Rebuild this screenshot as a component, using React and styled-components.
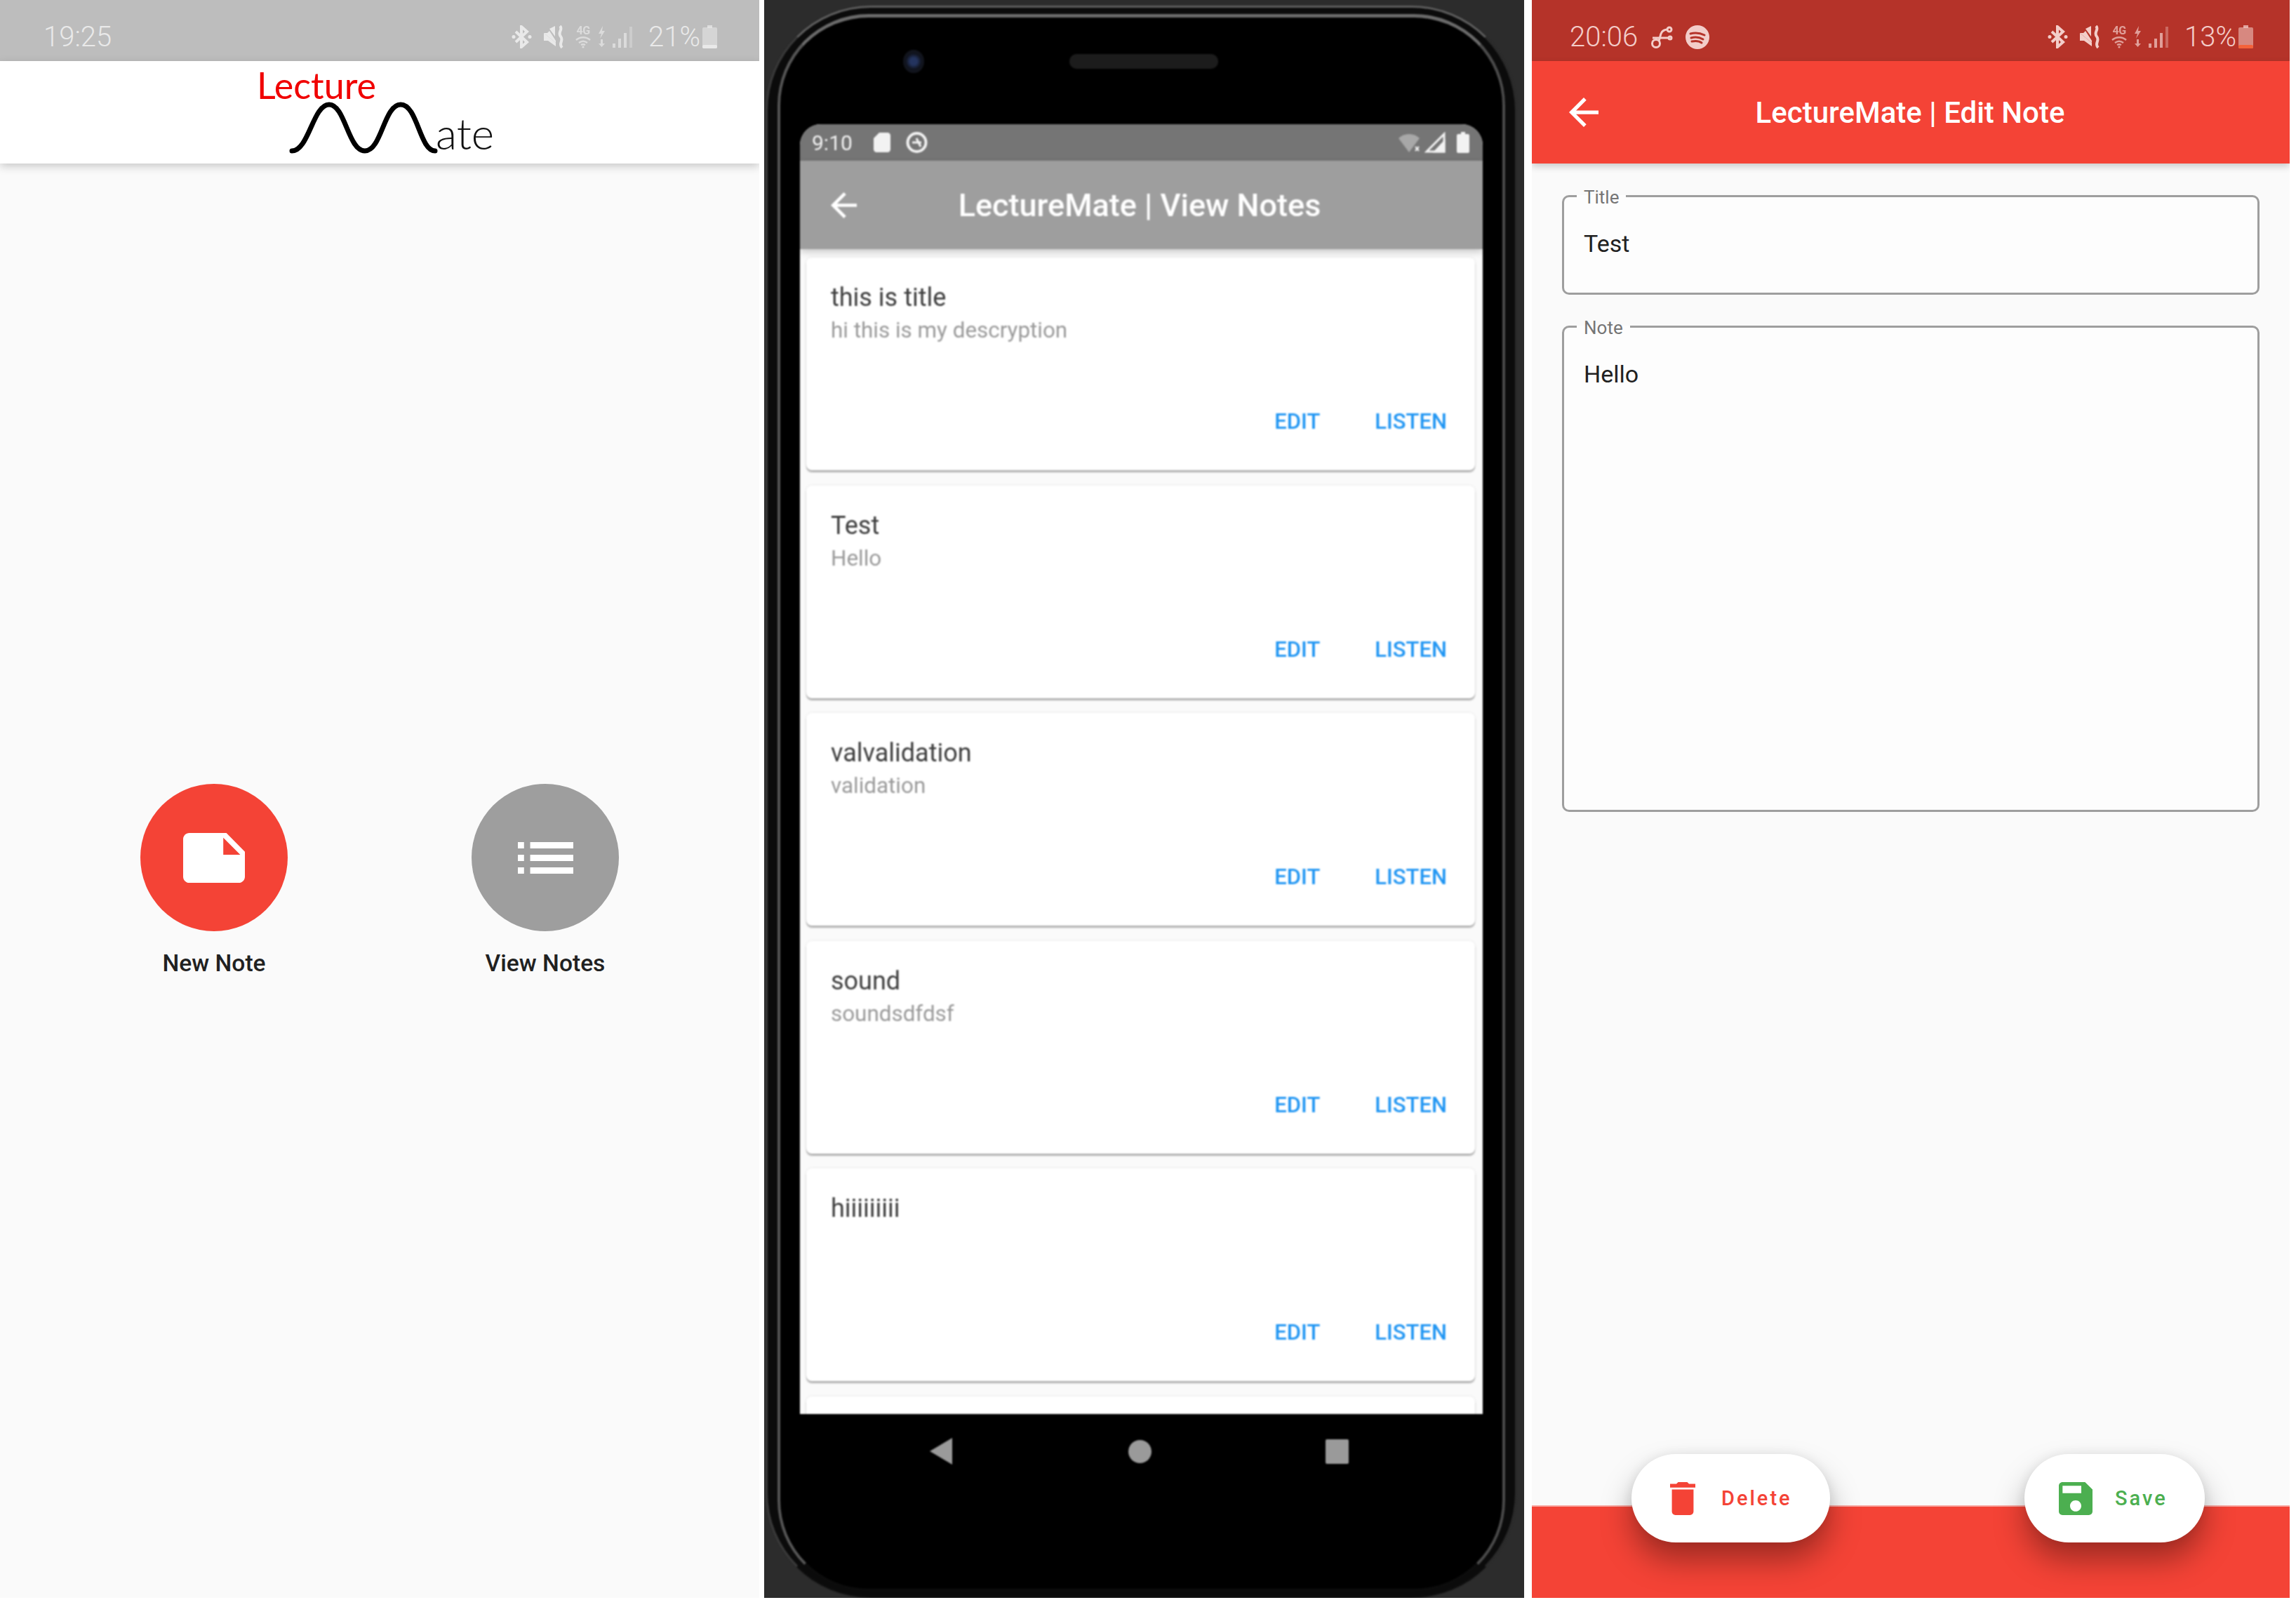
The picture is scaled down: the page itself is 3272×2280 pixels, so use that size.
import React from 'react';
import styled, { createGlobalStyle } from 'styled-components';

const RED = '#f44336';
const GRAY = '#9e9e9e';
const BLUE = '#2196f3';
const GREEN = '#4caf50';

const notes = [
  { title: 'this is title', text: 'hi this is my descryption' },
  { title: 'Test', text: 'Hello' },
  { title: 'valvalidation', text: 'validation' },
  { title: 'sound', text: 'soundsdfdsf' },
  { title: 'hiiiiiiiii', text: '' },
];

const GlobalStyle = createGlobalStyle`
  html, body {
    margin: 0;
    background: #fff;
  }
  * {
    box-sizing: border-box;
  }
`;

//#region page
const Page = styled.div`
  display: flex;
  width: 3272px;
  height: 2277px;
  font-family: Roboto, 'Liberation Sans', sans-serif;
  background: #fff;
`;

const AppPanel = styled.section`
  display: flex;
  flex-direction: column;
  width: ${(p) => p.$width}px;
  margin-right: ${(p) => p.$gap || 0}px;
  background: #fafafa;
  overflow: hidden;
`;
//#endregion

//#region samsung status bar
const StatusBar = styled.div`
  flex: none;
  display: flex;
  align-items: center;
  justify-content: space-between;
  height: 87px;
  padding: 18px ${(p) => p.$right}px 0 ${(p) => p.$left}px;
  background: ${(p) => p.$bg};
  color: ${(p) => p.$color};
  font-size: 40px;
  font-weight: 300;
`;

const StatusGroup = styled.div`
  display: flex;
  align-items: center;
  gap: ${(p) => p.$gap || 0}px;
`;

const Time = styled.span`
  line-height: 40px;
`;

const Percent = styled.span`
  width: 70px;
  margin-left: 23px;
  margin-right: 7px;
  line-height: 40px;
  white-space: nowrap;
`;

const NetworkBadge = styled.div`
  display: flex;
  flex-direction: column;
  align-items: center;
  width: 24px;
  margin: 0 8px 0 14px;
  opacity: 0.7;
`;

const BadgeText = styled.span`
  font-size: 16px;
  line-height: 14px;
  font-weight: 700;
  letter-spacing: -0.5px;
`;

const Dim = styled.span`
  display: flex;
  opacity: ${(p) => p.$opacity || 0.7};
  margin: ${(p) => p.$margin || 0};
`;

const Bluetooth = () => (
  <svg width="29" height="33" viewBox="0 0 29 33" fill="none" stroke="currentColor" strokeWidth="4">
    <path d="M6 9l16 15-8 7V2l8 7L6 24" />
    <circle cx="3" cy="16.5" r="2.500" fill="currentColor" stroke="none" />
    <circle cx="26" cy="16.5" r="2.500" fill="currentColor" stroke="none" />
  </svg>
);

const MuteVibrate = () => (
  <svg width="31" height="33" viewBox="0 0 31 33" fill="currentColor">
    <path d="M1 11h5l3-3 9 14v3zM9 5l8-4v15z" />
    <path d="M1 11v11h6l11 8v-5z" />
    <path d="M24 1c5 5-4 9 1 15s-4 10 2 16" fill="none" stroke="currentColor" strokeWidth="4" />
  </svg>
);

const WifiArcs = () => (
  <svg width="22" height="18" viewBox="0 0 22 18" fill="none" stroke="currentColor" strokeWidth="2.4">
    <path d="M1 6c6-5 14-5 20 0M5 10c4-3 8-3 12 0M8 13c2-1 4-1 6 0" />
    <circle cx="11" cy="16" r="1.6" fill="currentColor" stroke="none" />
  </svg>
);

const Charging = () => (
  <svg width="13" height="33" viewBox="0 0 13 33" fill="currentColor">
    <path d="M8 1L2 12h4l-2 7 7-11H7zM5 20h3v6h3l-4.500 5L2 26h3z" />
  </svg>
);

const Signal = () => (
  <svg width="28" height="33" viewBox="0 0 28 33" fill="currentColor">
    <rect x="0" y="26" width="4" height="6" />
    <rect x="8" y="19" width="4" height="13" />
    <rect x="16" y="11" width="4" height="21" />
    <rect x="24" y="2" width="4" height="30" opacity=".5" />
  </svg>
);

const Battery = ({ level, low }) => (
  <svg width="21" height="33" viewBox="0 0 21 33">
    <rect x="7" y="0" width="7" height="4" fill="currentColor" opacity=".75" />
    <rect x="0" y="3" width="21" height="30" rx="2" fill="currentColor" opacity=".55" />
    <rect x="0" y={33 - level} width="21" height={level} rx="2" fill={low || 'currentColor'} />
  </svg>
);

const Tether = () => (
  <svg width="32" height="32" viewBox="0 0 32 32" fill="none" stroke="currentColor" strokeWidth="3">
    <circle cx="8" cy="25" r="5.500" />
    <path d="M12 21c3-6 1-15 12-16" />
    <path d="M3 17h23" />
    <circle cx="27" cy="5" r="3" />
    <circle cx="28" cy="17" r="2" />
  </svg>
);

const Spotify = ({ cut }) => (
  <svg width="34" height="34" viewBox="0 0 34 34" fill="none" stroke={cut} strokeWidth="3" strokeLinecap="round">
    <circle cx="17" cy="17" r="17" fill="currentColor" stroke="none" />
    <path d="M7 12c7-2 14-1 20 2M8 18c6-2 12-1 17 2M9 23c5-1 10-1 14 2" />
  </svg>
);

const SamsungStatus = ({ time, percent, left, right, bg, color, low, extras }) => (
  <StatusBar $left={left} $right={right} $bg={bg} $color={color}>
    <StatusGroup $gap={18}>
      <Time>{time}</Time>
      {extras}
    </StatusGroup>
    <StatusGroup>
      <Bluetooth />
      <Dim $opacity={1} $margin="0 0 0 16px">
        <MuteVibrate />
      </Dim>
      <NetworkBadge>
        <BadgeText>4G</BadgeText>
        <WifiArcs />
      </NetworkBadge>
      <Dim $margin="0 9px 0 0">
        <Charging />
      </Dim>
      <Dim>
        <Signal />
      </Dim>
      <Percent>{percent}</Percent>
      <Battery level={5} low={low} />
    </StatusGroup>
  </StatusBar>
);
//#endregion

//#region home screen
const LogoBar = styled.header`
  flex: none;
  display: flex;
  flex-direction: column;
  align-items: flex-start;
  height: 146px;
  padding: 8px 0 0 366px;
  background: #fff;
  box-shadow: 0 4px 12px rgba(0, 0, 0, 0.2);
`;

const LogoTop = styled.span`
  font-family: Lato, 'Open Sans', sans-serif;
  font-size: 52px;
  line-height: 52px;
  color: #f00000;
  font-weight: 400;
`;

const LogoRow = styled.div`
  display: flex;
  align-items: flex-end;
  margin: -2px 0 0 46px;
`;

const LogoEnd = styled.span`
  font-family: Lato, 'Open Sans', sans-serif;
  font-size: 62px;
  line-height: 62px;
  font-weight: 300;
  color: #111;
  margin: 0 0 -1px -5px;
`;

const LogoWave = () => (
  <svg width="214" height="74" viewBox="0 0 214 74" fill="none" stroke="#000" strokeWidth="7" strokeLinecap="round">
    <path d="M4 70C28 70 34 4 57 4s27 66 51 66 27-66 51-66 27 66 49 66" />
  </svg>
);

const ActionArea = styled.main`
  flex: 1;
  display: flex;
  justify-content: center;
  align-items: flex-start;
  gap: 172px;
  padding-top: 884px;
`;

const Action = styled.div`
  display: flex;
  flex-direction: column;
  align-items: center;
  width: 300px;
`;

const ActionCircle = styled.div`
  display: flex;
  align-items: center;
  justify-content: center;
  width: 210px;
  height: 210px;
  border-radius: 50%;
  background: ${(p) => p.$color};
`;

const ActionLabel = styled.span`
  margin-top: 26px;
  font-size: 33.6px;
  line-height: 40px;
  font-weight: 500;
  color: #212121;
`;

const HomeScreen = () => (
  <AppPanel $width={1082} $gap={7}>
    <SamsungStatus time="19:25" percent="21%" left={62} right={60} bg="#bdbdbd" color="#e9e9e9" />
    <LogoBar>
      <LogoTop>Lecture</LogoTop>
      <LogoRow>
        <LogoWave />
        <LogoEnd>ate</LogoEnd>
      </LogoRow>
    </LogoBar>
    <ActionArea>
      <Action>
        <ActionCircle $color={RED}>
          <svg width="88" height="71" viewBox="2 4 20 16" preserveAspectRatio="none" fill="#fff">
            <path d="M22 10l-6-6H4c-1.100 0-2 .9-2 2v12.010c0 1.100.9 1.990 2 1.990l16-.01c1.100 0 2-.89 2-1.990v-8zm-7-4.500l5.500 5.500H15V5.500z" />
          </svg>
        </ActionCircle>
        <ActionLabel>New Note</ActionLabel>
      </Action>
      <Action>
        <ActionCircle $color={GRAY}>
          <svg width="79" height="45" viewBox="3 7 18 10" preserveAspectRatio="none" fill="#fff">
            <path d="M3 13h2v-2H3v2zm0 4h2v-2H3v2zm0-8h2V7H3v2zm4 4h14v-2H7v2zm0 4h14v-2H7v2zM7 7v2h14V7H7z" />
          </svg>
        </ActionCircle>
        <ActionLabel>View Notes</ActionLabel>
      </Action>
    </ActionArea>
  </AppPanel>
);
//#endregion

//#region phone mockup
const DevicePanel = styled.section`
  display: flex;
  flex-direction: column;
  width: 1083px;
  margin-right: 11px;
  padding: 8px 10px 0 2px;
  background: #2c2c2c;
`;

const Device = styled.div`
  flex: 1;
  display: flex;
  padding: 9px 14px 6px;
  border: 3px solid;
  border-color: #5e5e5e #2a2a2a #0e0e0e #3a3a3a;
  border-radius: 150px;
  background: #0b0b0b;
  filter: blur(1px);
`;

const Bezel = styled.div`
  flex: 1;
  display: flex;
  flex-direction: column;
  padding: 0 28px;
  border: 4px solid;
  border-top-width: 5px;
  border-color: #6a6a6a #4a4a4a #0c0c0c #555;
  border-radius: 130px;
  background: #000;
`;

const Earpiece = styled.div`
  flex: none;
  display: flex;
  align-items: center;
  height: 152px;
  padding: 0 0 28px 147px;
`;

const Camera = styled.div`
  width: 30px;
  height: 33px;
  border-radius: 50%;
  background: radial-gradient(circle, #24345f 0 22%, #10131d 50%, #16181d 100%);
`;

const Speaker = styled.div`
  width: 212px;
  height: 21px;
  margin-left: 207px;
  border-radius: 10px;
  background: #1c1c1c;
`;

const Screen = styled.div`
  flex: none;
  display: flex;
  flex-direction: column;
  height: 1838px;
  border-radius: 30px 30px 0 0;
  background: #fafafa;
  overflow: hidden;
`;

const EmuStatus = styled.div`
  flex: none;
  display: flex;
  align-items: center;
  justify-content: space-between;
  height: 52px;
  padding: 0 19px 0 17px;
  background: #757575;
  color: #f2f2f2;
  font-size: 30px;
`;

const AppBar = styled.header`
  flex: none;
  display: grid;
  grid-template-columns: 1fr auto 1fr;
  align-items: center;
  height: ${(p) => p.$height}px;
  padding: 0 ${(p) => p.$right}px 0 ${(p) => p.$left}px;
  background: ${(p) => p.$bg};
  color: #fff;
  font-size: ${(p) => p.$size}px;
  font-weight: 500;
  box-shadow: 0 4px 10px rgba(0, 0, 0, 0.2);
  position: relative;
`;

const NoteList = styled.div`
  display: flex;
  flex-direction: column;
  gap: 21.5px;
  padding: 12px 11px 0 9px;
`;

const NoteCard = styled.article`
  flex: none;
  display: flex;
  flex-direction: column;
  height: 303px;
  padding: 33px 40px 0 35px;
  border-radius: 8px;
  background: #fff;
  box-shadow: 0 3px 2px rgba(0, 0, 0, 0.28), 0 0 4px rgba(0, 0, 0, 0.08);
`;

const NoteTitle = styled.div`
  font-size: 36px;
  line-height: 48px;
  color: #3d3d3d;
`;

const NoteText = styled.div`
  font-size: 31.4px;
  line-height: 46px;
  color: #9a9a9a;
`;

const NoteActions = styled.div`
  display: flex;
  justify-content: flex-end;
  gap: 78px;
  margin-top: auto;
  margin-bottom: 51px;
`;

const NoteButton = styled.span`
  font-size: 31px;
  line-height: 36px;
  font-weight: 500;
  color: ${BLUE};
`;

const NavBar = styled.div`
  flex: none;
  display: flex;
  align-items: center;
  height: 106px;
  padding-left: 185px;
  color: #9a9a9a;
`;

const NavBack = styled.div`
  width: 32px;
  height: 38px;
  background: currentColor;
  clip-path: polygon(100% 0, 100% 100%, 0 50%);
`;

const NavHome = styled.div`
  width: 33px;
  height: 33px;
  margin-left: 251px;
  border-radius: 50%;
  background: currentColor;
`;

const NavRecent = styled.div`
  width: 33px;
  height: 35px;
  margin-left: 248px;
  border-radius: 2px;
  background: currentColor;
`;

const BackArrow = ({ size }) => (
  <svg width={size} height={size} viewBox="4 4 16 16" fill="currentColor">
    <path d="M20 11H7.830l5.590-5.590L12 4l-8 8 8 8 1.410-1.410L7.830 13H20v-2z" />
  </svg>
);

const ViewNotesPhone = () => (
  <DevicePanel>
    <Device>
      <Bezel>
        <Earpiece>
          <Camera />
          <Speaker />
        </Earpiece>
        <Screen>
          <EmuStatus>
            <StatusGroup $gap={30}>
              <span>9:10</span>
              <svg width="24" height="28" viewBox="0 0 24 28" fill="currentColor">
                <path d="M8 0h12c2 0 4 2 4 4v20c0 2-2 4-4 4H4c-2 0-4-2-4-4V8z" />
              </svg>
              <Dim $opacity={1} $margin="0 0 0 -9px">
                <svg width="33" height="30" viewBox="0 0 33 30" fill="none" stroke="currentColor" strokeWidth="4">
                  <circle cx="16.500" cy="15" r="13" />
                  <path d="M10 15h13M16 9l6 12" strokeWidth="3" />
                </svg>
              </Dim>
            </StatusGroup>
            <StatusGroup $gap={5}>
              <svg width="32" height="30" viewBox="0 0 32 30" fill="#a8a8a8">
                <path d="M0 9c8-8 22-8 30 0L15 29z" />
                <path d="M24 21l5 6M29 21l-5 6" stroke="#f2f2f2" strokeWidth="2" />
              </svg>
              <Dim $opacity={1} $margin="0 11px 0 0">
                <svg width="30" height="30" viewBox="0 0 30 30" fill="none" stroke="currentColor" strokeWidth="3">
                  <path d="M28 3v25H3z" />
                  <path d="M28 14v14H15z" fill="currentColor" />
                </svg>
              </Dim>
              <svg width="18" height="30" viewBox="0 0 18 30" fill="currentColor">
                <path d="M6 0h6v3h4c1 0 2 1 2 2v23c0 1-1 2-2 2H2c-1 0-2-1-2-2V5c0-1 1-2 2-2h4z" />
              </svg>
            </StatusGroup>
          </EmuStatus>
          <AppBar $height={126} $left={44} $right={49} $bg={GRAY} $size={45}>
            <BackArrow size={37} />
            <span>LectureMate | View Notes</span>
          </AppBar>
          <NoteList>
            {notes.map((note) => (
              <NoteCard key={note.title}>
                <NoteTitle>{note.title}</NoteTitle>
                <NoteText>{note.text}</NoteText>
                <NoteActions>
                  <NoteButton>EDIT</NoteButton>
                  <NoteButton>LISTEN</NoteButton>
                </NoteActions>
              </NoteCard>
            ))}
            <NoteCard />
          </NoteList>
        </Screen>
        <NavBar>
          <NavBack />
          <NavHome />
          <NavRecent />
        </NavBar>
      </Bezel>
    </Device>
  </DevicePanel>
);
//#endregion

//#region edit screen
const EditForm = styled.main`
  flex: 1;
  display: flex;
  flex-direction: column;
  gap: 29px;
  padding: 30px 43px 0;
`;

const Field = styled.fieldset`
  height: ${(p) => p.$height}px;
  margin: 0;
  padding: 32px 28px 0;
  border: 3px solid ${GRAY};
  border-radius: 10px;
  background: #fdfdfd;
`;

const FieldLabel = styled.legend`
  margin-left: -10px;
  padding: 4px 10px 0;
  font-size: 26px;
  line-height: 28px;
  color: #757575;
`;

const FieldValue = styled.div`
  font-size: 34px;
  line-height: 40px;
  color: #212121;
`;

const BottomBar = styled.footer`
  flex: none;
  display: flex;
  align-items: flex-start;
  height: 132px;
  padding-left: 142px;
  border-top: 2px solid #f8a9a3;
  background: ${RED};
`;

const Fab = styled.div`
  display: flex;
  align-items: center;
  gap: ${(p) => p.$gap}px;
  width: ${(p) => p.$width}px;
  height: 126px;
  margin: -75px ${(p) => p.$after || 0}px 0 0;
  padding-left: ${(p) => p.$pad}px;
  border-radius: 63px;
  background: #fff;
  color: ${(p) => p.$color};
  font-size: 29px;
  font-weight: 500;
  letter-spacing: 3px;
  position: relative;
  box-shadow: 0 26px 44px rgba(0, 0, 0, 0.34), 0 0 16px rgba(0, 0, 0, 0.07);
`;

const EditScreen = () => (
  <AppPanel $width={1080}>
    <SamsungStatus
      time="20:06"
      percent="13%"
      left={54}
      right={52}
      bg="#b53329"
      color="#f3cdc9"
      low="#f4623a"
      extras={
        <>
          <Tether />
          <Spotify cut="#b53329" />
        </>
      }
    />
    <AppBar $height={146} $left={53} $right={55} $bg={RED} $size={42}>
      <BackArrow size={42} />
      <span>LectureMate | Edit Note</span>
    </AppBar>
    <EditForm>
      <Field $height={157}>
        <FieldLabel>Title</FieldLabel>
        <FieldValue>Test</FieldValue>
      </Field>
      <Field $height={708}>
        <FieldLabel>Note</FieldLabel>
        <FieldValue>Hello</FieldValue>
      </Field>
    </EditForm>
    <BottomBar>
      <Fab $width={283} $pad={55} $gap={37} $after={277} $color={RED}>
        <svg width="36" height="47" viewBox="5 3 14 18" preserveAspectRatio="none" fill="currentColor">
          <path d="M6 19c0 1.100.9 2 2 2h8c1.100 0 2-.9 2-2V7H6v12zM19 4h-3.500l-1-1h-5l-1 1H5v2h14V4z" />
        </svg>
        Delete
      </Fab>
      <Fab $width={257} $pad={49} $gap={32} $color={GREEN}>
        <svg width="48" height="47" viewBox="3 3 18 18" preserveAspectRatio="none" fill="currentColor">
          <path d="M17 3H5c-1.110 0-2 .9-2 2v14c0 1.100.89 2 2 2h14c1.100 0 2-.9 2-2V7l-4-4zm-5 16c-1.660 0-3-1.340-3-3s1.340-3 3-3 3 1.340 3 3-1.340 3-3 3zm3-10H5V5h10v4z" />
        </svg>
        Save
      </Fab>
    </BottomBar>
  </AppPanel>
);
//#endregion

const App = () => (
  <>
    <GlobalStyle />
    <Page>
      <HomeScreen />
      <ViewNotesPhone />
      <EditScreen />
    </Page>
  </>
);

export default App;
